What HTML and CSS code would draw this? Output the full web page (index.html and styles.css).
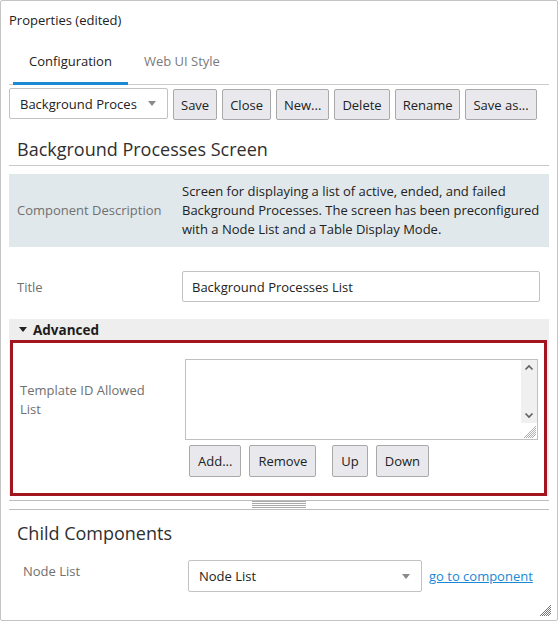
FILE: index.html
```html
<!DOCTYPE html>
<html lang="en">
<head>
<meta charset="utf-8">
<title>Properties</title>
<link rel="stylesheet" href="styles.css">
</head>
<body>
<div class="window">
  <div class="win-title">Properties (edited)</div>
  <div class="tabs">
    <div class="tab active">Configuration</div>
    <div class="tab">Web UI Style</div>
  </div>
  <div class="toolbar">
    <div class="select screen-select"><span class="sel-text">Background Proces</span><span class="caret"></span></div>
    <button class="btn">Save</button>
    <button class="btn">Close</button>
    <button class="btn">New...</button>
    <button class="btn">Delete</button>
    <button class="btn">Rename</button>
    <button class="btn">Save as...</button>
  </div>
  <h2 class="section-title ruled">Background Processes Screen</h2>
  <div class="desc">
    <div class="desc-label">Component Description</div>
    <div class="desc-text">Screen for displaying a list of active, ended, and failed Background Processes. The screen has been preconfigured with a Node List and a Table Display Mode.</div>
  </div>
  <div class="title-row">
    <label class="field-label">Title</label>
    <input class="text-input" type="text" value="Background Processes List">
  </div>
  <div class="advanced">
    <div class="adv-header"><span class="tri"></span>Advanced</div>
    <div class="adv-box">
      <div class="list-label">Template ID Allowed List</div>
      <div class="list-field">
        <div class="listbox">
          <textarea class="listbox-area"></textarea>
          <div class="scrollbar">
            <div class="sb-track">
              <svg class="sb-arrow" width="16" height="16" viewBox="0 0 16 16"><path d="M4.5 9.5 L8 6 L11.5 9.5" fill="none" stroke="#5f5f5f" stroke-width="1.6"/></svg>
              <svg class="sb-arrow" width="16" height="16" viewBox="0 0 16 16"><path d="M4.5 6.5 L8 10 L11.5 6.5" fill="none" stroke="#5f5f5f" stroke-width="1.6"/></svg>
            </div>
            <div class="sb-corner">
              <svg width="16" height="16" viewBox="0 0 16 16"><path d="M15 3 L3 15 M15 7 L7 15 M15 11 L11 15 M15 5 L5 15 M15 9 L9 15" stroke="#9a9a9a" stroke-width="0.8"/></svg>
            </div>
          </div>
        </div>
        <div class="list-buttons">
          <button class="btn tall">Add...</button>
          <button class="btn tall">Remove</button>
          <button class="btn tall spaced">Up</button>
          <button class="btn tall">Down</button>
        </div>
      </div>
    </div>
  </div>
  <div class="splitter"><span class="handle"></span></div>
  <h2 class="section-title child-title">Child Components</h2>
  <div class="child-row">
    <div class="child-label">Node List</div>
    <div class="select node-select"><span class="sel-text">Node List</span><span class="caret"></span></div>
    <a class="link" href="#">go to component</a>
  </div>
  <svg class="window-grip" width="14" height="14" viewBox="0 0 14 14"><path d="M13 2 L2 13 M13 6 L6 13 M13 10 L10 13 M13 4 L4 13 M13 8 L8 13" stroke="#666" stroke-width="0.9"/></svg>
</div>
</body>
</html>
```

FILE: styles.css
```css
* { box-sizing: border-box; }

html, body {
  margin: 0;
  padding: 0;
  background: #ffffff;
}

body {
  font-family: "Open Sans", "Noto Sans", sans-serif;
  font-size: 13px;
  color: #222222;
}

.window {
  position: relative;
  width: 558px;
  height: 621px;
  border: 1px solid #c4c4c4;
  border-radius: 2px;
  padding: 0 8px;
  overflow: hidden;
}

.win-title {
  height: 38px;
  padding: 10px 0 0 0;
  line-height: 18px;
  color: #222;
}

.tabs {
  display: flex;
  height: 46px;
  border-bottom: 1px solid #cccccc;
}

.tab {
  height: 46px;
  margin-bottom: -1px;
  padding: 2px 16px 0;
  line-height: 41px;
  font-size: 13px;
  color: #7a7a7a;
  border-bottom: 3px solid transparent;
}

.tab.active {
  margin-left: 4px;
  color: #222;
  border-bottom-color: #1a8ad4;
}

.toolbar {
  display: flex;
  gap: 5px;
  margin-top: 4px;
  align-items: flex-start;
}

.select {
  display: flex;
  align-items: center;
  height: 31px;
  border: 1px solid #c2c2c2;
  border-radius: 2px;
  background: #fff;
  padding: 0 11px 0 10px;
  color: #222;
}

.select .sel-text {
  flex: 1;
  white-space: nowrap;
  overflow: hidden;
}

.caret {
  width: 0;
  height: 0;
  border-left: 4.5px solid transparent;
  border-right: 4.5px solid transparent;
  border-top: 5px solid #8a8a8a;
}

.screen-select {
  width: 159px;
  flex: none;
  margin-top: -1px;
}

.btn {
  flex: none;
  height: 31px;
  padding: 0 7px;
  white-space: nowrap;
  font-family: inherit;
  font-size: 13px;
  color: #222;
  background: #e9e9ed;
  border: 1px solid #a9a9a9;
  border-radius: 2px;
}

.section-title {
  margin: 16px 0 0;
  padding: 0 8px 3px;
  line-height: 26px;
  font-size: 18px;
  font-weight: normal;
  color: #2f2f2f;
}

.section-title.ruled {
  border-bottom: 1px solid #c8c8c8;
}

.desc {
  display: grid;
  grid-template-columns: 173px 1fr;
  margin-top: 8px;
  padding: 8px 8px 8px 0;
  background: #e1e8eb;
  line-height: 19px;
}

.desc-label {
  align-self: center;
  padding-left: 8px;
  color: #707070;
}

.desc-text {
  color: #222;
}

.title-row {
  display: grid;
  grid-template-columns: 173px 1fr;
  align-items: center;
  margin-top: 24px;
  padding-right: 9px;
}

.field-label {
  padding-left: 8px;
  color: #707070;
}

.text-input {
  height: 31px;
  padding: 0 9px;
  font-family: inherit;
  font-size: 13px;
  color: #222;
  border: 1px solid #c2c2c2;
  border-radius: 2px;
}

.advanced {
  margin-top: 17px;
  background: #eeeeee;
}

.adv-header {
  display: flex;
  align-items: center;
  height: 21px;
  padding-left: 10px;
  font-weight: bold;
  font-size: 13.5px;
  color: #1c1c1c;
}

.tri {
  width: 0;
  height: 0;
  margin-right: 6px;
  border-left: 4px solid transparent;
  border-right: 4px solid transparent;
  border-top: 5px solid #222;
}

.adv-box {
  display: flex;
  align-items: flex-start;
  margin: 0 2px 0 1px;
  padding: 16px 6px 16px 0;
  background: #fff;
  border: 3px solid #a3161f;
}

.list-label {
  width: 172px;
  flex: none;
  align-self: flex-start;
  margin-top: 22px;
  padding-left: 7px;
  padding-right: 32px;
  line-height: 19px;
  color: #707070;
}

.list-field {
  flex: 1;
}

.listbox {
  display: flex;
  height: 81px;
  border: 1px solid #c0c0c0;
  background: #fff;
}

.listbox-area {
  flex: 1;
  border: none;
  outline: none;
  resize: none;
  margin: 0;
  padding: 4px;
  font-family: inherit;
}

.scrollbar {
  width: 16px;
  display: flex;
  flex-direction: column;
}

.sb-track {
  flex: 1;
  display: flex;
  flex-direction: column;
  justify-content: space-between;
  background: #f0f0f0;
}

.sb-arrow {
  display: block;
}

.sb-corner {
  height: 16px;
}

.sb-corner svg {
  display: block;
}

.list-buttons {
  display: flex;
  gap: 8px;
  margin-top: 5px;
  padding-left: 4px;
}

.btn.tall {
  height: 32px;
  padding: 0 8px;
}

.btn.spaced {
  margin-left: 8px;
}

.splitter {
  position: relative;
  display: flex;
  justify-content: center;
  height: 10px;
  margin-top: 4px;
  border-top: 1px solid #bdbdbd;
  border-bottom: 1px solid #bdbdbd;
}

.handle {
  width: 54px;
  height: 7px;
  background: repeating-linear-gradient(to bottom, #a8a8a8 0, #a8a8a8 1px, transparent 1px, transparent 2px);
}

.child-title {
  margin-top: 10px;
}

.child-row {
  display: flex;
  align-items: center;
  margin-top: 11px;
}

.child-label {
  width: 179px;
  flex: none;
  align-self: flex-start;
  padding-left: 14px;
  padding-top: 1px;
  line-height: 20px;
  color: #707070;
}

.node-select {
  width: 234px;
  height: 32px;
  padding-right: 11px;
}

.link {
  margin-left: 7px;
  color: #1a88d6;
  text-decoration: underline;
}

.window-grip {
  position: absolute;
  right: 5px;
  bottom: 3px;
}
```
